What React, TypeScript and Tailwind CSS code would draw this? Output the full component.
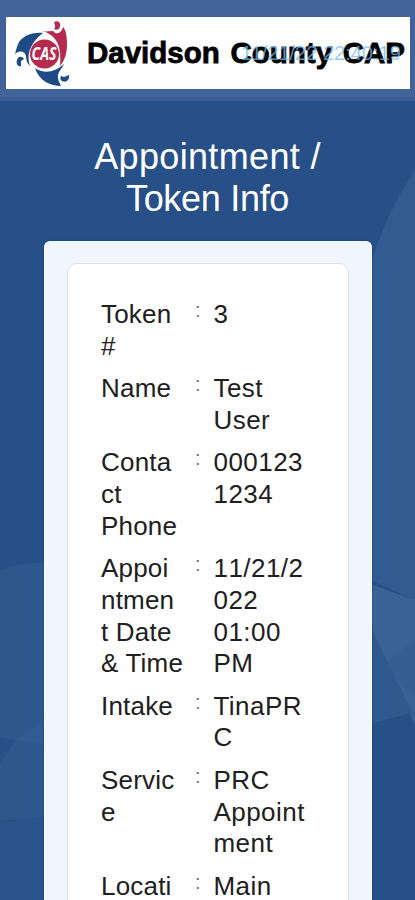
import React from 'react';

const details = [
    { label: ['Token', '#'], value: ['3'] },
    { label: ['Name'], value: ['Test', 'User'] },
    { label: ['Conta', 'ct', 'Phone'], value: ['000123', '1234'] },
    { label: ['Appoi', 'ntmen', 't Date', '& Time'], value: ['11/21/2', '022', '01:00', 'PM'] },
    { label: ['Intake'], value: ['TinaPR', 'C'] },
    { label: ['Servic', 'e'], value: ['PRC', 'Appoint', 'ment'] },
    { label: ['Locati'], value: ['Main'] },
];

const Lines = ({ lines }: { lines: string[] }) => (
    <>
        {lines.map((line) => (
            <span
                key={line}
                className={/^\d/.test(line) ? 'block whitespace-nowrap [font-kerning:none]' : 'block whitespace-nowrap'}
            >
                {line}
            </span>
        ))}
    </>
);

const Logo = () => (
    <svg className="h-[68px] w-[56px] shrink-0" viewBox="14 18 56 68">
        <path d="M43 32C34 31 24 34 19 41C17 45 16 49 15 53C19 49 25 50 26 55C26 59 27 62 30 65C27 56 29 48 34 41C37 37 40 34 43 32Z" fill="#1f4a88" />
        <path d="M42 30C47 31 50 30 53 30C57 35 62 31 63 26C66 29 67 36 67 43C67 52 65 59 60 65C61 54 60 44 55 38C52 34 47 31 42 30Z" fill="#b52a4e" />
        <path d="M35 67C44 73 54 72 64 63C62 68 57 71 58 77C58 80 60 82 61 85C51 85 39 80 35 67Z" fill="#1f4a88" />
        <circle cx="44.500" cy="53" r="14.500" fill="#b52a4e" />
        <path d="M54 21C58 19 61 22 60 25C60 28 57 30 54 28C56 26 55 24 54 21Z" fill="#b52a4e" />
        <path d="M17 59C18 55 22 55 24 58L21 60L21 65C17 66 16 62 17 59Z" fill="#1f4a88" />
        <path d="M61 75L64 76L69 74C70 79 66 82 62 80C60 79 60 77 61 75Z" fill="#1f4a88" />
        <text x="44" y="59" textAnchor="middle" textLength="25" lengthAdjust="spacingAndGlyphs" fill="#fff" fontFamily="Open Sans, sans-serif" fontSize="17" fontWeight="700" fontStyle="italic">CAS</text>
    </svg>
);

const Backdrop = () => (
    <svg className="absolute inset-0 h-full w-full" viewBox="0 0 415 900" preserveAspectRatio="none">
        <path d="M415 170Q388 210 370 265V580L415 600Z" fill="#325b91" />
        <path d="M370 584L415 600V725L370 626Z" fill="#3b6296" />
        <path d="M370 626L415 718V712L370 724Z" fill="#2f598f" />
        <path d="M387 662L415 640V695L397 681Z" fill="#355e93" />
        <path d="M0 570Q20 563 46 562V820H0Z" fill="#2d578d" />
        <path d="M16 740L46 717V745Z" fill="#325b91" />
        <path d="M0 737L16 740L0 764Z" fill="#28518a" />
        <path d="M0 824L46 816V900H0Z" fill="#2a548b" />
    </svg>
);

const Header = () => (
    <header className="relative h-[101px] border-b-4 border-[#385d92] bg-[#416399] pl-1.5 pr-[5px] pt-[17px]">
        <div className="flex h-[72px] items-center bg-white pl-2">
            <Logo />
            <h1 className="ml-[17px] whitespace-nowrap text-[29.5px] font-bold leading-none text-black [-webkit-text-stroke:0.8px_black] [word-spacing:2.5px]">
                Davidson County CAP
            </h1>
        </div>
        <time className="absolute left-[241px] top-[42px] whitespace-nowrap text-[20px] leading-[22px] text-[#74bdf2]/75">
            11/21/22 22:40:19
        </time>
    </header>
);

const App = () => (
    <div className="relative h-[900px] w-full overflow-hidden bg-[#275088] font-['Liberation_Sans',sans-serif]">
        <Backdrop />
        <div className="relative">
            <Header />
            <h2 className="h-[118px] pt-[35px] text-center text-[36px] leading-[42px] text-white">
                <span className="block tracking-[0.35px]">Appointment /</span>
                <span className="block tracking-[-0.3px]">Token Info</span>
            </h2>
            <main className="ml-11 mr-[43px] mt-[22px] rounded-t-[6px] border-x border-t border-[#fcfeff] bg-[#eff6fe] px-[22px] pt-[21px] shadow-[0_0_2px_#003c7d]">
                <div className="flex h-[760px] flex-col gap-[10.9px] rounded-t-[10px] border border-[#dfe2e5] bg-white pl-[33px] pt-[35px] text-[26px] leading-[31.65px] tracking-[0.2px] text-[#202020]">
                    {details.map(({ label, value }) => (
                        <div key={label[0]} className="flex">
                            <div className="w-[94px]"><Lines lines={label} /></div>
                            <div className="w-[18.5px] text-[20px] leading-[23px] text-[#777]">:</div>
                            <div className="tracking-[0.45px]"><Lines lines={value} /></div>
                        </div>
                    ))}
                </div>
            </main>
        </div>
    </div>
);

export default App;
